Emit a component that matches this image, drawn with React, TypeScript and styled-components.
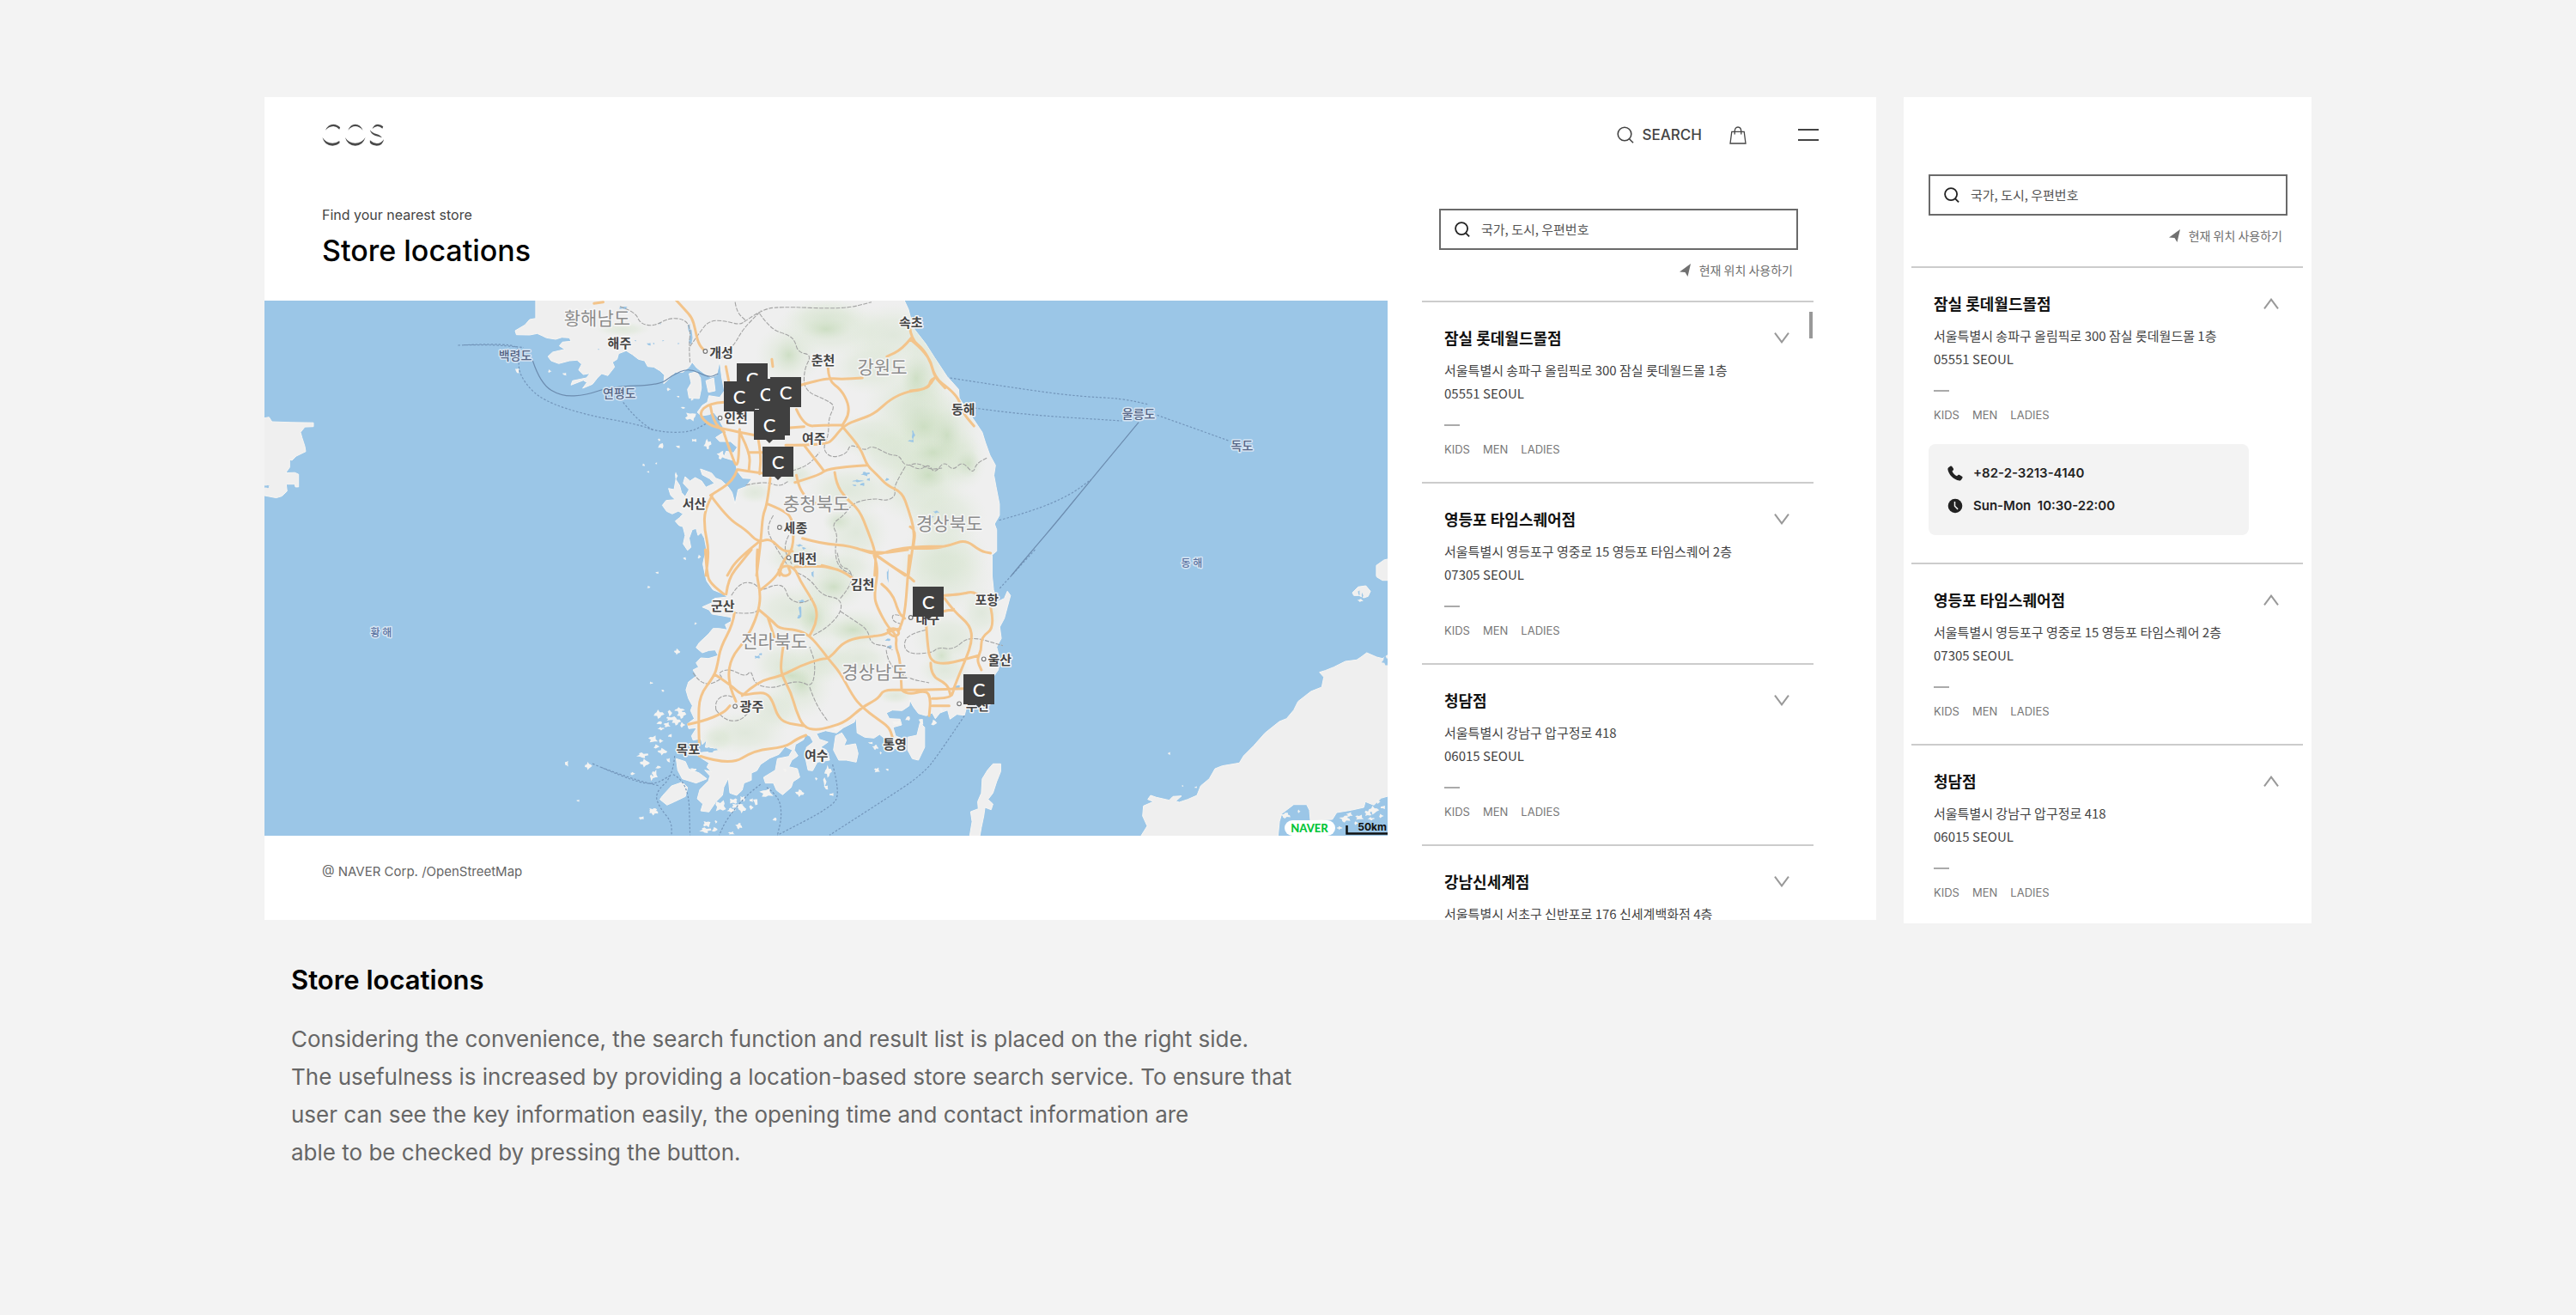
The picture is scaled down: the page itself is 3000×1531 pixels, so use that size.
import React, { useId } from "react";
import styled, { createGlobalStyle } from "styled-components";

const latin = `Inter, "Noto Sans CJK KR", sans-serif`;
const korean = `"Noto Sans CJK KR", "Noto Sans", sans-serif`;

const GlobalStyle = createGlobalStyle`
  *, *::before, *::after { box-sizing: border-box; }
  body { margin: 0; background: #f3f3f3; font-family: ${latin}; color: #000; }
  h1, h2, h3, p, ul, figure { margin: 0; padding: 0; }
  button, input { font: inherit; }
  button { border: 0; padding: 0; background: none; cursor: pointer; color: inherit; }
`;

/* ---------- page ---------- */

const Page = styled.main`
  min-height: 100vh;
  padding: 113px 308px;
`;

const Showcase = styled.div`
  display: grid;
  grid-template-columns: minmax(0, 1fr) 475px;
  gap: 32px;
  align-items: start;
`;

const DesktopCard = styled.section`
  background: #fff;
`;

const MobileCard = styled.section`
  background: #fff;
  padding: 90px 10px 0 9px;
`;

/* ---------- desktop header ---------- */

const TopBar = styled.header`
  display: flex;
  align-items: center;
  justify-content: space-between;
  height: 88px;
  padding: 0 67px;
`;

const Logo = styled.a`
  display: flex;
  color: #4a4a4a;
`;

const Nav = styled.nav`
  display: flex;
  align-items: center;
`;

const NavButton = styled.button<{ $gap: number }>`
  display: flex;
  align-items: center;
  gap: 10px;
  margin-left: ${(p) => p.$gap}px;
  font-size: 17px;
  font-weight: 500;
  line-height: 24px;
  color: #444;
`;

const Body = styled.div`
  display: grid;
  grid-template-columns: minmax(0, 1fr) 456px;
  column-gap: 40px;
  padding-right: 73px;
`;

const Intro = styled.div`
  padding: 37px 67px 38px;
`;

const Tagline = styled.p`
  font-size: 16px;
  line-height: 24px;
  color: #444;
`;

const Title = styled.h1`
  margin-top: 10px;
  font-size: 34px;
  font-weight: 500;
  line-height: 40px;
`;

const Credit = styled.p`
  padding: 32px 67px 46px;
  font-size: 15px;
  line-height: 20px;
  color: #666;
`;

/* ---------- store finder ---------- */

const Finder = styled.div<{ $clipped?: boolean }>`
  position: relative;
  ${(p) => p.$clipped && "height: 0; min-height: 100%; overflow: hidden; padding-top: 42px;"}
`;

const SearchBox = styled.label`
  display: flex;
  align-items: center;
  gap: 13px;
  height: 48px;
  margin: 0 18px 0 20px;
  padding: 0 16px;
  border: 2px solid #6a6a6a;
  color: #222;
`;

const SearchInput = styled.input`
  flex: 1;
  min-width: 0;
  border: 0;
  outline: 0;
  padding: 0;
  background: transparent;
  font-family: ${korean};
  font-size: 15px;
  line-height: 24px;
  color: #333;
  &::placeholder { color: #555; opacity: 1; }
`;

const LocateButton = styled.button`
  display: flex;
  align-items: center;
  gap: 10px;
  margin: 12px 24px 25px auto;
  font-family: ${korean};
  font-size: 14px;
  line-height: 22px;
  color: #707070;
`;

const StoreList = styled.ul`
  list-style: none;
`;

const StoreItem = styled.li`
  padding: 27px 28px 28px 26px;
  border-top: 2px solid #ccc;
  &:last-child { padding-bottom: 26px; }
`;

const StoreHead = styled.div`
  display: flex;
  align-items: center;
  justify-content: space-between;
`;

const StoreName = styled.h3`
  font-family: ${korean};
  font-size: 18px;
  font-weight: 700;
  line-height: 28px;
  color: #111;
`;

const Toggle = styled.button`
  display: flex;
  color: #999;
`;

const Address = styled.p`
  margin-top: 10px;
  font-family: ${korean};
  font-size: 15px;
  line-height: 27px;
  color: #444;
`;

const Dash = styled.div`
  width: 18px;
  height: 2px;
  margin: 23px 0 17px;
  background: #aaa;
`;

const Tags = styled.div`
  display: flex;
  gap: 15px;
  font-size: 13px;
  line-height: 20px;
  color: #777;
`;

const Contact = styled.div`
  display: grid;
  row-gap: 14px;
  margin: 24px 35px 4px -6px;
  padding: 22px;
  border-radius: 8px;
  background: #f3f3f3;
`;

const ContactRow = styled.div`
  display: flex;
  align-items: center;
  gap: 12px;
  font-size: 15px;
  font-weight: 600;
  line-height: 24px;
  color: #222;
  white-space: pre;
`;

const ScrollThumb = styled.div`
  position: absolute;
  top: 162px;
  right: 1px;
  width: 4px;
  height: 31px;
  background: #999;
`;

/* ---------- caption ---------- */

const Caption = styled.section`
  padding: 46px 31px 0;
`;

const CaptionTitle = styled.h2`
  font-size: 31px;
  font-weight: 600;
  line-height: 40px;
`;

const CaptionText = styled.p`
  margin-top: 27px;
  font-size: 26px;
  line-height: 44px;
  color: #666;
`;

/* ---------- map frame ---------- */

const MapFrame = styled.figure`
  position: relative;
  aspect-ratio: 1308 / 623;
  background: #9bc6e7;
  overflow: hidden;
`;

const MapSvg = styled.svg`
  display: block;
  width: 100%;
  height: 100%;
`;

const Pin = styled.button`
  position: absolute;
  width: 36px;
  height: 35px;
  background: #404040;
  color: #fff;
  font-family: Lato, sans-serif;
  font-size: 22px;
  font-weight: 500;
  line-height: 35px;
  text-align: center;
  &::after {
    content: "";
    position: absolute;
    left: 14px;
    top: 35px;
    border: 4px solid transparent;
    border-top-color: #404040;
  }
`;

/* ---------- icons ---------- */

const SearchIcon = ({ size = 20, width = 1.6 }: { size?: number; width?: number }) => (
  <svg width={size} height={size} viewBox="0 0 20 20" fill="none" stroke="currentColor" strokeWidth={width} aria-hidden>
    <circle cx="9" cy="9" r="7.8" />
    <path d="M14 14.2 19 19.3" />
  </svg>
);

const BagIcon = () => (
  <svg width="20" height="21" viewBox="0 0 20 21" fill="none" stroke="currentColor" strokeWidth="1.3" aria-hidden>
    <path d="M2.8 6.3h14.4L19 20H1z" />
    <path d="M6.2 9.6V6.4C6.2 3 7.6 1 10 1s3.8 2 3.8 5.4v3.2" />
  </svg>
);

const MenuIcon = () => (
  <svg width="24" height="14" viewBox="0 0 24 14" stroke="currentColor" strokeWidth="2" aria-hidden>
    <path d="M0 1h24M0 13h24" />
  </svg>
);

const ArrowIcon = () => (
  <svg width="13" height="15" viewBox="0 0 13 15" fill="currentColor" aria-hidden>
    <path d="M13 0 0 9.500l6.500.5L9.500 15z" />
  </svg>
);

const ChevronIcon = ({ up }: { up?: boolean }) => (
  <svg width="18" height="13" viewBox="0 0 18 13" fill="none" stroke="currentColor" strokeWidth="2" aria-hidden>
    <path d={up ? "M1 12.3 9 1.6l8 10.700" : "M1 .7l8 10.700L17 .7"} />
  </svg>
);

const PhoneIcon = () => (
  <svg width="18" height="18" viewBox="0 0 18 18" fill="currentColor" aria-hidden>
    <path d="M1.3 2.2 3.4.7c.6-.4 1.4-.3 1.8.3l1.7 2.6c.4.6.3 1.3-.2 1.8L5.500 6.500c.8 2.300 2.800 4.600 5.500 5.800l1.400-1.200c.5-.4 1.200-.5 1.800-.1l2.800 1.700c.6.4.8 1.200.4 1.800l-1.300 2.100c-.5.8-1.400 1.200-2.300 1C6.800 16.300 1.300 10.400.4 4.500c-.1-.9.2-1.800.9-2.300z" />
  </svg>
);

const ClockIcon = () => (
  <svg width="18" height="18" viewBox="0 0 18 18" aria-hidden>
    <circle cx="9" cy="9" r="8.3" fill="currentColor" />
    <path d="M8.500 4v5.300l3.600 3.600" fill="none" stroke="#f3f3f3" strokeWidth="1.5" />
  </svg>
);

const CosLogo = () => (
  <svg width="73" height="26" viewBox="168 132 166 78" preserveAspectRatio="none" fill="currentColor" role="img" aria-label="COS">
    <path d="M177 155Q184 134 198 134Q208 134 216 145L214 152Q207 142 198 141Q186 142 177 155Z" />
    <path d="M169 180Q179 200 196 200Q206 200 214 192L215 199Q207 209 196 209Q175 209 169 180Z" />
    <path d="M237 155Q243 134 256 134Q270 134 276 155Q267 141 256 141Q246 141 237 155Z" />
    <path d="M229 180Q239 200 256 200Q273 200 283 180Q276 209 256 209Q236 209 229 180Z" />
    <path d="M301 150Q306 134 316 134Q324 134 330 142L328 149Q322 141 315 141Q307 142 301 150Z" />
    <path d="M295 154Q300 164 312 168Q323 172 327 181Q318 177 309 174Q297 168 295 154Z" />
    <path d="M295 190Q304 201 313 201Q325 201 332 186Q329 209 313 209Q301 209 295 199Z" />
  </svg>
);

/* ---------- map data ---------- */

/* The coastline was digitised on five sheets; each has an origin and a scale. */
type Sheet = [number, number, number, number];
const N: Sheet = [540, 340, 2.8, 3];
const S: Sheet = [700, 640, 2.8, 3];
const E: Sheet = [1060, 340, 2.8, 3];
const J: Sheet = [1260, 660, 3, 3];
const W: Sheet = [300, 340, 3, 2.45];

type Pt = [number, number];
const at = ([ox, oy, sx, sy]: Sheet, x: number, y: number): Pt => [
  Math.round((ox + x / sx) * 10) / 10,
  Math.round((oy + y / sy) * 10) / 10,
];
const plot = (sheet: Sheet, s: string): Pt[] =>
  s.trim().split(/\s+/).map((p) => {
    const [x, y] = p.split(",").map(Number);
    return at(sheet, x, y);
  });

const area = (pts: Pt[]) => "M" + pts.map((p) => p.join(" ")).join("L") + "Z";

/* Rounds a polyline by running quadratic curves through segment midpoints. */
const curve = (pts: Pt[]) => {
  let d = `M${pts[0].join(" ")}`;
  for (let i = 1; i < pts.length - 1; i++) {
    const mx = (pts[i][0] + pts[i + 1][0]) / 2;
    const my = (pts[i][1] + pts[i + 1][1]) / 2;
    d += `Q${pts[i].join(" ")} ${mx} ${my}`;
  }
  return d + `L${pts[pts.length - 1].join(" ")}`;
};
const curves = (sheet: Sheet, lines: string[]) => lines.map((l) => curve(plot(sheet, l))).join("");

/* An uneven, rocky outline for a small island. */
const rock = (sheet: Sheet, x: number, y: number, rx: number, ry: number) => {
  const n = rx > 8 ? 11 : 7;
  const pts: Pt[] = [];
  for (let i = 0; i < n; i++) {
    const a = (i / n) * Math.PI * 2;
    const k = 0.95 + 0.38 * Math.sin(x * 1.7 + y * 0.9 + i * 2.4);
    pts.push(at(sheet, x + Math.cos(a) * rx * k, y + Math.sin(a) * ry * k));
  }
  return area(pts);
};

const mainland = area([
  ...plot(N, "235,25 235,92 215,96 200,115 168,135 172,149 215,150 240,145 255,152 270,160 300,165 320,158 345,160 350,172 322,175 312,188 330,200 290,210 275,225 285,240 310,250 345,240 370,238 385,252 375,272 390,288 412,284 400,300 355,310 350,325 390,308 402,316 388,336 420,322 436,300 450,285 470,292 492,262 485,245 500,235 505,215 530,205 550,218 570,235 590,240 600,260 620,262 640,275 655,290 652,320 665,308 690,280 715,280 735,262 745,245 760,265 785,285 805,298 825,290 835,240 842,300 850,345 835,368 800,362 795,385 778,396 762,420 775,432 800,428 815,420 830,440 845,470 848,490 822,508 835,522 870,522 892,542 880,562 856,556 848,578 885,590 892,625 910,650 940,652 920,680 895,690 885,740 875,700 862,680 840,658 822,650 808,632 772,618 778,638 802,652 818,668 790,682 776,660 755,648 738,660 722,645 716,668 735,690 722,715 710,700 704,675 692,655 686,690 668,686 675,710 690,725 660,728 648,745 662,766 680,775 700,765 715,775 704,788 690,800 702,815 715,820 722,850 716,880 730,902 741,892 735,860 745,830 758,826 764,850 775,840 785,860 792,900 784,930 780,950 788,990"),
  ...plot(S, "340,90 345,110 365,140 400,155 412,165 370,170 362,185 330,200 352,210 362,225 392,230 424,236 425,250 405,262 412,280 385,275 365,275 350,295 320,325 310,342 330,360 352,352 372,350 382,370 350,380 325,378 310,395 318,410 300,420 312,440 285,462 277,490 285,520 298,545 292,562 304,590 282,608 286,625 312,622 295,650 300,665 326,660 330,680 345,664 340,690 368,692 370,705 330,708 310,715 330,730 352,745 345,760 360,775 338,770 355,790 350,808 322,838 314,870 332,888 325,912 352,916 375,880 396,858 400,830 415,798 420,850 442,858 460,840 466,815 490,805 490,780 508,772 520,750 550,728 580,715 600,688 624,700 612,722 575,730 568,770 530,795 536,815 562,815 572,840 592,856 620,830 626,810 648,795 640,765 612,758 622,735 642,720 630,700 634,680 660,664 668,644 682,652 692,672 670,690 665,720 675,770 690,772 705,742 745,735 735,700 716,690 740,672 712,662 702,642 732,632 768,640 790,622 826,602 832,585 835,640 860,655 890,658 908,645 925,660 940,690 962,695 990,680 985,662 960,650 952,620 980,612 975,592 940,590 930,570 950,560 982,562 1005,545 1007,525 1018,548 1035,572 1060,580 1080,570 1090,590 1105,570 1130,560 1138,592 1160,575 1185,578 1192,550 1240,530 1260,520 1280,480 1275,450 1295,420 1300,380 1290,340 1305,310 1300,270 1315,240 1325,200 1335,160 1325,145 1315,170 1292,182 1280,140 1275,90 1275,20"),
  ...plot(E, "265,920 282,905 282,830 275,810 291,780 291,740 280,680 273,640 278,605 260,570 245,525 235,490 210,450 190,420 160,370 158,340 120,295 80,230 50,180 10,125"),
  ...plot(N, "1450,60 1435,25"),
]);

const otherLand = [
  area(plot(W, "20,360 40,357 50,370 120,372 195,373 195,384 165,385 150,400 155,415 165,440 168,455 150,462 135,468 120,480 112,478 112,500 98,516 130,515 143,520 143,556 132,556 130,548 100,548 103,568 85,582 65,587 20,580")),
  area(plot(J, "1072,306 1050,320 1030,315 995,300 975,315 960,325 920,330 880,350 850,362 830,368 845,385 838,420 800,435 755,470 740,500 715,530 690,540 640,580 600,625 565,660 550,685 490,695 465,705 445,740 415,765 402,798 370,812 340,822 328,818 348,800 318,802 305,815 260,805 240,798 230,812 250,820 215,835 212,870 228,905 205,942 685,942 690,890 698,862 740,830 785,830 795,850 798,885 875,882 890,858 940,850 985,840 990,820 1020,832 1045,808 1072,800")),
  area([...plot(E, "1560,932 1545,936 1520,955 1520,990"), ...plot(J, "1030,35 1050,47 1072,47")]),
  area(plot(S, "1278,748 1303,748 1303,775 1290,810 1278,850 1262,872 1278,888 1272,908 1252,900 1248,930 1240,970 1235,1000 1202,1000 1210,950 1205,915 1230,905 1228,880 1240,850 1243,800 1260,770")),
  area(plot(N, "735,285 760,278 772,300 775,335 768,372 735,370 730,340 742,318")),
  area(plot(N, "790,310 815,300 820,345 798,350")),
  area(plot(S, "200,860 230,825 265,812 282,830 275,862 240,880 215,892 192,872")),
  area(plot(S, "245,730 275,740 285,765 320,780 345,800 310,815 265,800 250,770")),
  area(plot(S, "765,650 785,640 800,665 792,685 830,678 838,712 832,742 800,735 775,735 758,700")),
  area(plot(S, "1000,655 1030,648 1040,605 1055,620 1055,690 1035,735 1015,730 1000,700")),
  area(plot(J, "945,90 965,70 992,66 1008,85 1000,103 985,108 968,100 950,100")),
];

const isles: [Sheet, string][] = [
  [W, "908,224,7,8 1020,226,6,4 1073,234,7,4 1155,1352,11,9 1080,1345,6,8 1310,1374,7,4 1120,1451,5,3 1348,493,4,3 1393,489,3,3 1365,513,4,2 1366,842,5,3 1398,800,4,3 1374,1115,4,3 1416,1138,4,3 1385,1482,14,9 1342,1500,8,4"],
  [N, "643,538,8,10 795,532,10,16 752,518,9,5 700,540,7,5 740,435,17,14 716,404,8,3 668,340,7,5 745,375,5,4 638,516,5,4 588,605,4,3 602,628,4,3 840,570,12,14 693,642,5,12 722,932,4,4 630,980,4,3 768,925,5,6 826,690,8,4 700,365,5,3"],
  [S, "155,130,4,3 182,80,4,3 272,30,4,4 308,258,4,4 248,356,9,9 164,466,5,3 201,491,4,3 188,575,14,13 225,570,8,10 255,560,14,8 262,575,12,14 230,590,18,7 190,605,8,6 215,612,10,8 245,600,12,12 265,612,8,8 170,662,14,11 195,668,8,6 180,688,8,7 200,705,14,10 195,625,9,5 135,718,16,9 142,745,14,12 175,785,9,14 102,782,6,4 165,795,6,10 170,912,14,9 130,938,8,4 186,760,8,5 225,650,6,6 220,735,6,8 300,770,10,7 390,895,18,18 432,878,14,9 445,895,20,8 460,905,12,12 490,900,8,7 505,880,8,12 462,870,9,9 425,910,12,8 375,950,5,5 345,958,12,10 340,980,16,9 450,965,10,10 370,978,8,8 425,990,10,5 540,850,20,14 490,875,6,6 600,770,6,6 648,850,13,11 740,775,10,18 730,810,6,14 702,800,5,5 735,830,7,8 752,855,7,5 566,942,6,6 900,770,9,8 934,768,5,4 895,690,9,8 880,675,8,4 965,605,16,7 1085,605,8,10 1045,600,8,12 912,710,4,4 770,625,12,7 1000,590,7,8 1110,560,6,8"],
  [J, "305,652,4,5 398,770,4,3 352,765,3,3 712,868,16,9 758,854,5,5 920,880,17,11 935,865,10,7 970,875,14,8 1000,860,12,10 1018,850,16,12 1052,840,8,6 1045,870,8,6 900,912,9,5 1035,820,8,6 958,895,8,5 973,117,9,5 1010,880,10,5"],
];

const lakes: [Sheet, string][] = [
  [N, "1310,635,12,7 1285,660,16,4 1300,672,7,6 1380,655,6,5 1275,675,8,3 1320,655,5,5 605,182,7,5 560,170,3,2 620,180,3,3 640,110,3,3 740,160,5,30 520,55,14,5 735,125,4,16 1455,520,6,3 1465,490,3,8 1095,885,10,4 1110,895,8,4 440,200,3,2 480,160,3,2 650,170,3,2 700,180,3,2"],
  [S, "650,215,5,22 655,180,10,5 645,235,5,7 510,375,10,5 520,365,5,4 690,85,4,12 935,315,8,5 940,340,8,6 1160,480,12,7 355,700,20,8 600,90,5,3 935,90,3,25"],
  [E, "85,768,9,4 70,785,7,5 10,500,5,14 5,520,8,5"],
  [W, "30,555,12,4"],
  [J, "1062,328,12,15 980,100,3,9 968,90,3,9"],
];

const hills: [Sheet, string][] = [
  [N, "1200,130,190,100 1060,220,110,110 1400,150,160,110 1180,90,140,70 1460,400,160,150 1500,560,180,120 1330,500,140,80 1260,690,150,90 1280,840,110,110 1480,690,150,120 1330,260,140,100 520,130,90,28 1240,960,110,60 950,700,60,40 1090,640,60,40 1500,270,90,150 1400,560,130,100"],
  [E, "30,420,110,150 120,500,110,160 60,620,130,110 170,590,80,110 110,780,140,120 110,920,150,120"],
  [S, "750,130,120,90 620,210,140,90 700,240,80,100 830,280,130,80 650,470,110,130 720,390,110,80 1120,90,160,140 1130,310,120,100 1240,220,70,90 470,640,140,80 380,660,60,50 960,510,60,30 840,380,110,60 590,400,100,80 1120,420,90,60 560,560,100,80 640,30,110,60"],
];

const peaks: [Sheet, string][] = [
  [S, "760,130,60,45 690,240,45,60 655,470,50,55 1110,370,40,40 820,280,80,40 620,440,60,30"],
  [N, "1060,220,50,60 1180,130,80,40 1500,470,80,80 1530,560,70,50 1220,800,50,40"],
  [E, "120,500,50,90 60,640,60,50 20,300,50,80 190,600,40,50"],
];

const roads =
  curves(N, [
    "690,25 720,60 745,90 755,130 765,180 785,205",
    "425,40 455,35",
    "1100,325 1180,300 1230,305 1300,300",
    "1460,160 1430,200 1380,225",
    "1455,125 1460,165 1500,200 1525,250 1535,295 1570,335",
    "1535,300 1515,340 1450,345 1390,375 1340,425 1290,445 1240,465 1200,520 1180,530 1110,535 1050,535",
    "1188,265 1190,310 1230,340 1255,390 1255,430 1235,465",
    "1085,410 1110,470 1170,465 1235,465",
    "1055,475 1110,470",
    "1235,470 1275,520 1300,560 1315,605 1350,640 1380,675 1430,700 1450,760 1470,830 1465,890 1450,990",
    "848,490 870,560 895,625 900,480",
    "835,475 900,490 950,500",
    "900,490 935,560 930,625",
    "960,510 970,570 965,635",
    "930,560 985,560",
    "895,620 960,632 1050,640",
    "892,620 880,660 805,710",
    "805,710 860,790 920,830 960,875 1000,860 1040,905 1072,905",
    "1000,650 990,740 975,780 970,860 955,990",
    "990,740 1050,765 1075,800 1075,900 1040,940 1030,990",
    "1085,640 1095,700 1150,740",
    "1080,665 1160,640 1180,620 1250,610 1315,605",
    "1110,535 1150,590 1175,625",
    "1210,630 1215,670 1245,720 1290,760 1320,840 1345,915 1340,990",
    "1105,860 1170,880 1260,885 1345,920 1400,900 1470,890 1570,888",
    "960,875 890,935 860,990",
    "810,710 785,760 785,830 800,900 790,990",
    "1345,920 1440,990",
    "850,385 800,388 765,425 800,465 845,478",
    "805,400 812,450 850,490",
    "855,260 865,315",
    "1005,235 1008,260",
    "1080,960 1160,955 1220,970",
  ]) +
  curves(S, [
    "340,0 345,90 360,120 400,155",
    "408,155 415,100 460,40 490,0",
    "510,0 505,80 520,150 515,210 490,280 460,330 430,370 415,420 420,480 440,530",
    "520,140 570,100 590,50",
    "580,75 590,55 630,60 650,110 680,160 705,210 700,260 680,300",
    "580,70 590,95 620,85 610,60",
    "720,55 780,70 820,100",
    "515,210 560,250 580,275 640,280 680,300 720,350 740,380 780,430 820,510 850,550 900,590 940,620 950,655",
    "545,240 565,305",
    "595,330 585,400 590,440 620,500 635,560 660,620 700,630 745,620 800,600 850,550 905,520 920,490 980,490 1060,490 1180,485",
    "435,220 430,260 390,340 380,400 370,440 320,510 318,600 320,680",
    "370,435 420,470 460,510 500,500 540,500 560,530 575,580 600,605 660,615",
    "460,510 510,460 590,440 650,405 720,380 745,380 800,310 920,300 940,285 975,275",
    "285,610 330,600 400,570 420,545",
    "320,720 420,755 500,700 600,690 640,660 668,648",
    "890,20 905,60 890,160 900,200 935,270 965,300 960,340 975,380 980,490",
    "900,20 950,60 1000,90 1020,110",
    "915,120 950,150 970,220 990,240",
    "1005,20 1000,100 990,230 970,285",
    "850,0 900,15 1000,0",
    "935,280 955,270 975,290 960,305 940,295 935,280",
    "1120,160 1180,155 1210,145 1240,165",
    "1120,170 1150,215 1205,265 1210,320 1190,380 1170,430 1150,485",
    "1060,260 1065,340 1075,390 1120,400 1180,385 1230,370",
    "1270,200 1285,270 1240,305 1240,350 1225,385 1240,420",
    "1085,222 1150,208",
    "1075,395 1075,440 1130,470 1140,510",
    "980,490 1000,508 1060,490 1075,520 1070,580",
    "1080,520 1140,520 1150,490",
    "1080,545 1135,545",
  ]) +
  curves(E, [
    "0,345 60,340 65,310 80,300",
    "0,165 60,215 80,300 130,340 160,375 170,420 208,468",
    "0,895 70,897 130,885 180,865 230,905 262,912",
    "0,820 18,830 10,890",
  ]);

const borders =
  curves(N, [
    "510,50 560,70 575,110 620,120 670,90 720,95 740,125 735,190 738,250",
    "738,190 770,140 800,100 850,100 900,115 920,100 970,65 1020,50 1240,60 1330,35",
    "885,35 890,70 920,100",
    "840,230 880,190 910,130 970,65",
    "965,75 1000,130 1060,150 1080,170 1090,210 1135,220 1110,270 1110,345 1190,380 1210,400 1190,440 1190,500 1170,550 1200,580 1250,565 1260,530 1310,555 1330,535 1390,570 1420,570 1440,610 1480,595 1520,620 1560,615",
    "1440,610 1400,680 1410,710 1380,730 1340,720 1270,735 1240,780 1200,810 1220,850 1210,900 1220,960 1270,990",
    "1070,625 1120,610 1160,560",
    "920,675 980,660 1030,680 1060,660",
    "1060,850 1040,890 1070,950",
    "1010,780 985,820 1010,880 1060,960",
  ]) +
  curves(E, ["0,605 30,625 60,600 80,635 110,590 140,625 170,590 205,635 215,600 252,578"]) +
  curves(S, [
    "425,160 450,115 500,115 520,145 570,120 600,130 610,170 650,190 690,170",
    "640,80 680,100 720,160 780,170 785,215 740,270 690,300",
    "780,170 820,120 815,70 780,60 770,10",
    "780,215 830,250 870,280 880,330 930,335 950,350",
    "300,430 330,480 400,450 380,430 420,415 470,445 490,420 500,470 560,485 610,465 650,460 690,480 700,400 680,340",
    "680,480 700,540 740,600",
    "1060,280 1000,295 985,340 1010,365 1080,360 1100,340 1150,350 1200,300 1310,335",
    "375,560 370,530 405,505 440,520",
    "375,560 400,595 450,600 480,570",
    "430,220 490,225 515,210",
    "930,350 935,400 1000,450 1070,465",
    "990,235 950,220 950,250 980,260",
  ]);

const ferries =
  curves(N, [
    "0,185 100,180 190,190 175,260 200,320 260,380 400,430 560,460 640,490 740,490 790,460",
    "520,385 560,440 620,485",
  ]) +
  curves(W, ["700,152 800,149 930,158", "1170,1345 1280,1385 1380,1408 1440,1380"]) +
  curves(E, [
    "130,300 400,345 560,365 690,372 775,392",
    "210,405 350,427 690,450",
    "805,430 950,485 1040,520",
    "290,797 400,765 520,710 590,655",
  ]) +
  curves(S, [
    "0,760 100,800 190,825",
    "1185,580 1110,700 1050,785 900,890 745,997",
    "240,720 235,790 175,850 190,900 230,950 230,997",
    "235,785 285,810 290,997",
    "755,750 780,850 750,900 575,997",
    "520,820 480,850 410,940 385,997",
    "540,830 580,860 590,930 575,997",
    "1415,0 1300,135",
  ]);

const seaways =
  curves(N, ["225,240 250,320 320,365 400,360 480,330 640,325 680,290 735,265 800,300 830,285"]) +
  curves(E, ["745,455 590,655 480,800 400,900 330,990"]);

type Kind = "province" | "city" | "isle" | "sea";
const labels: [Kind, Sheet, number, number, string][] = [
  ["province", N, 435, 92, "황해남도"],
  ["province", N, 1365, 265, "강원도"],
  ["province", N, 1150, 742, "충청북도"],
  ["province", E, 128, 810, "경상북도"],
  ["province", S, 565, 322, "전라북도"],
  ["province", S, 893, 430, "경상남도"],
  ["city", N, 508, 181, "해주"],
  ["city", N, 840, 213, "개성"],
  ["city", N, 1172, 240, "춘천"],
  ["city", N, 1458, 107, "속초"],
  ["city", N, 888, 441, "인천"],
  ["city", N, 1142, 512, "여주"],
  ["city", N, 752, 742, "서산"],
  ["city", N, 1082, 826, "세종"],
  ["city", N, 1113, 932, "대전"],
  ["city", S, 853, 124, "김천"],
  ["city", S, 397, 198, "군산"],
  ["city", S, 1258, 177, "포항"],
  ["city", S, 1065, 243, "대구"],
  ["city", S, 1300, 386, "울산"],
  ["city", S, 1228, 547, "부산"],
  ["city", S, 491, 548, "광주"],
  ["city", S, 284, 698, "목포"],
  ["city", S, 702, 720, "여수"],
  ["city", S, 958, 680, "통영"],
  ["city", E, 173, 412, "동해"],
  ["isle", N, 168, 222, "백령도"],
  ["isle", N, 508, 355, "연평도"],
  ["isle", E, 745, 427, "울릉도"],
  ["isle", E, 1082, 538, "독도"],
  ["sea", E, 918, 947, "동 해"],
  ["sea", W, 432, 972, "황 해"],
];

const towns: Pt[] = [
  at(N, 788, 207), at(N, 836, 440), at(N, 1030, 822), at(N, 1060, 928),
  at(S, 1010, 237), at(S, 1248, 382), at(S, 1168, 538), at(S, 437, 547),
];

const pins: { x: number; y: number }[] = [
  { x: 858, y: 423 }, { x: 884, y: 472 }, { x: 843, y: 444 }, { x: 874, y: 441 },
  { x: 897, y: 439 }, { x: 878, y: 477 }, { x: 888, y: 520 }, { x: 1063, y: 683 }, { x: 1122, y: 785 },
];

const MapLabel = styled.text<{ $kind: Kind }>`
  font-family: ${korean};
  font-size: ${(p) => ({ province: 21, city: 15, isle: 14, sea: 12 })[p.$kind]}px;
  font-weight: ${(p) => (p.$kind === "city" ? 700 : p.$kind === "province" ? 400 : 500)};
  fill: ${(p) => ({ province: "#8c8c8c", city: "#444", isle: "#566585", sea: "#5a72a0" })[p.$kind]};
  stroke: ${(p) => (p.$kind === "isle" || p.$kind === "sea" ? "#d5e4f3" : "#f6f6f6")};
  stroke-width: 3px;
  stroke-linejoin: round;
  paint-order: stroke;
  text-anchor: middle;
`;

const BrandText = styled.text`
  font-family: Lato, sans-serif;
  font-size: 13px;
  font-weight: 900;
  fill: #03c53a;
  text-anchor: middle;
`;

const ScaleText = styled.text`
  font-family: Inter, sans-serif;
  font-size: 12px;
  font-weight: 700;
  fill: #111;
  text-anchor: end;
`;

const Blobs = ({ data, fill }: { data: [Sheet, string][]; fill: string }) => (
  <g fill={fill}>
    {data.flatMap(([sheet, s], i) =>
      s.split(" ").map((e, j) => {
        const [x, y, rx, ry] = e.split(",").map(Number);
        const [cx, cy] = at(sheet, x, y);
        return <ellipse key={`${i}-${j}`} cx={cx} cy={cy} rx={rx / sheet[2]} ry={ry / sheet[3]} />;
      })
    )}
  </g>
);

const Rocks = ({ data, fill }: { data: [Sheet, string][]; fill: string }) => (
  <path
    fill={fill}
    d={data
      .flatMap(([sheet, s]) =>
        s.split(" ").map((e) => {
          const [x, y, rx, ry] = e.split(",").map(Number);
          return rock(sheet, x, y, rx, ry);
        })
      )
      .join("")}
  />
);

const StoreMap = () => (
  <MapFrame>
    <MapSvg viewBox="308 350 1308 623" preserveAspectRatio="xMidYMid slice" role="img" aria-label="Store map of South Korea">
      <defs>
        <radialGradient id="hill">
          <stop offset="0" stopColor="#d0e0c8" stopOpacity=".5" />
          <stop offset=".5" stopColor="#d5e4cc" stopOpacity=".35" />
          <stop offset="1" stopColor="#e2ebdc" stopOpacity="0" />
        </radialGradient>
        <radialGradient id="peak">
          <stop offset="0" stopColor="#b3d0a3" stopOpacity=".4" />
          <stop offset="1" stopColor="#c8dcbc" stopOpacity="0" />
        </radialGradient>
        <clipPath id="land"><path d={mainland} /></clipPath>
      </defs>
      <g fill="#efefef" stroke="#f8f6f3" strokeWidth="1" strokeLinejoin="round">
        <path d={mainland} />
        {otherLand.map((d, i) => <path key={i} d={d} />)}
      </g>
      <Rocks data={isles} fill="#f4f3f1" />
      <g clipPath="url(#land)">
        <Blobs data={hills} fill="url(#hill)" />
        <Blobs data={peaks} fill="url(#peak)" />
      </g>
      <Rocks data={lakes} fill="#9bc6e7" />
      <g fill="none" strokeLinejoin="round">
        <path d={borders} stroke="#a3a3a3" strokeWidth="1.1" strokeDasharray="5 1.5" />
        <path d={ferries} stroke="#7396bb" strokeWidth="1.2" strokeDasharray="2.5 2" />
        <path d={seaways} stroke="#6c8caf" strokeWidth="1.2" />
        <path d={roads} stroke="#f3c48b" strokeWidth="3" strokeLinecap="round" />
      </g>
      {towns.map(([x, y]) => (
        <circle key={`${x}${y}`} cx={x} cy={y} r="2.3" fill="#fff" stroke="#777" strokeWidth="1.2" />
      ))}
      {labels.map(([kind, sheet, lx, ly, text]) => {
        const [x, y] = at(sheet, lx, ly);
        const drop = kind === "province" ? 7 : kind === "sea" ? 4 : 5;
        return <MapLabel key={text + kind} $kind={kind} x={x} y={y + drop}>{text}</MapLabel>;
      })}
      <rect x="1496" y="955" width="59" height="18" rx="9" fill="#fff" />
      <BrandText x="1525" y="969">NAVER</BrandText>
      <ScaleText x="1615" y="967">50km</ScaleText>
      <path d="M1568.5 961v9.500H1616" fill="none" stroke="#111" strokeWidth="2.5" />
    </MapSvg>
    {pins.map((p, i) => (
      <Pin
        key={i}
        aria-label={`Store ${i + 1}`}
        style={{ left: `${((p.x - 308) / 1308) * 100}%`, top: `${((p.y - 350) / 623) * 100}%` }}
      >
        {i === 1 ? "" : "C"}
      </Pin>
    ))}
  </MapFrame>
);

/* ---------- stores ---------- */

type Store = { name: string; street: string; zip: string; phone?: string; hours?: string };

const stores: Store[] = [
  { name: "잠실 롯데월드몰점", street: "서울특별시 송파구 올림픽로 300 잠실 롯데월드몰 1층", zip: "05551 SEOUL", phone: "+82-2-3213-4140", hours: "Sun-Mon  10:30-22:00" },
  { name: "영등포 타임스퀘어점", street: "서울특별시 영등포구 영중로 15 영등포 타임스퀘어 2층", zip: "07305 SEOUL" },
  { name: "청담점", street: "서울특별시 강남구 압구정로 418", zip: "06015 SEOUL" },
  { name: "강남신세계점", street: "서울특별시 서초구 신반포로 176 신세계백화점 4층", zip: "" },
];

const StoreFinder = ({ items, expanded, clipped }: { items: Store[]; expanded?: boolean; clipped?: boolean }) => {
  const id = useId();
  return (
    <Finder $clipped={clipped}>
      <SearchBox htmlFor={id}>
        <SearchIcon size={18} width={2} />
        <SearchInput id={id} type="text" placeholder="국가, 도시, 우편번호" />
      </SearchBox>
      <LocateButton>
        <ArrowIcon />
        현재 위치 사용하기
      </LocateButton>
      <StoreList>
        {items.map((s) => (
          <StoreItem key={s.name}>
            <StoreHead>
              <StoreName>{s.name}</StoreName>
              <Toggle aria-label={s.name} aria-expanded={!!expanded}>
                <ChevronIcon up={expanded} />
              </Toggle>
            </StoreHead>
            <Address>
              {s.street}
              <br />
              {s.zip}
            </Address>
            {s.zip && (
              <>
                <Dash />
                <Tags>
                  <span>KIDS</span>
                  <span>MEN</span>
                  <span>LADIES</span>
                </Tags>
              </>
            )}
            {expanded && s.phone && (
              <Contact>
                <ContactRow><PhoneIcon />{s.phone}</ContactRow>
                <ContactRow><ClockIcon />{s.hours}</ContactRow>
              </Contact>
            )}
          </StoreItem>
        ))}
      </StoreList>
      {clipped && <ScrollThumb />}
    </Finder>
  );
};

export default function App() {
  return (
    <Page>
      <GlobalStyle />
      <Showcase>
        <DesktopCard>
          <TopBar>
            <Logo href="#"><CosLogo /></Logo>
            <Nav>
              <NavButton $gap={0}><SearchIcon />SEARCH</NavButton>
              <NavButton $gap={32} aria-label="Bag"><BagIcon /></NavButton>
              <NavButton $gap={60} aria-label="Menu"><MenuIcon /></NavButton>
            </Nav>
          </TopBar>
          <Body>
            <div>
              <Intro>
                <Tagline>Find your nearest store</Tagline>
                <Title>Store locations</Title>
              </Intro>
              <StoreMap />
              <Credit>@ NAVER Corp. /OpenStreetMap</Credit>
            </div>
            <StoreFinder items={stores} clipped />
          </Body>
        </DesktopCard>
        <MobileCard>
          <StoreFinder items={stores.slice(0, 3)} expanded />
        </MobileCard>
      </Showcase>
      <Caption>
        <CaptionTitle>Store locations</CaptionTitle>
        <CaptionText>
          Considering the convenience, the search function and result list is placed on the right side.
          <br />
          The usefulness is increased by providing a location-based store search service. To ensure that
          <br />
          user can see the key information easily, the opening time and contact information are
          <br />
          able to be checked by pressing the button.
        </CaptionText>
      </Caption>
    </Page>
  );
}
